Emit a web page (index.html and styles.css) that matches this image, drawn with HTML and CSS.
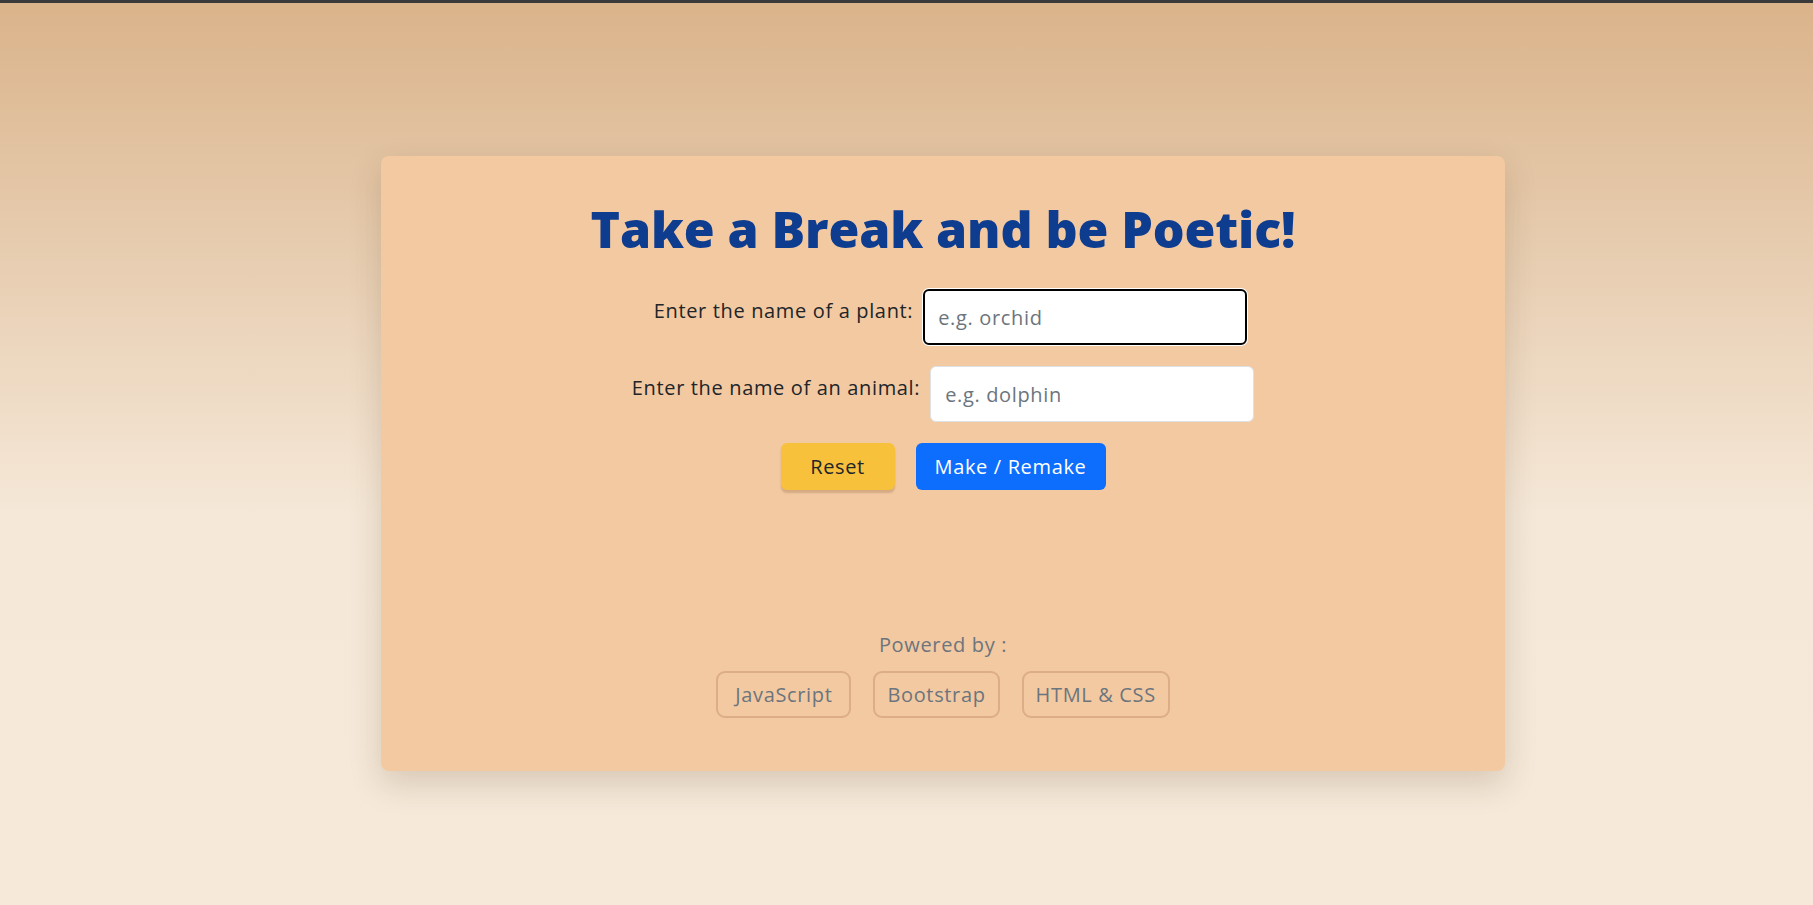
FILE: index.html
```html
<!DOCTYPE html>
<html lang="en">
<head>
<meta charset="utf-8">
<title>Poem Generator</title>
<link rel="stylesheet" href="styles.css">
</head>
<body>
<main class="card">
  <h1 class="title">Take a Break and be Poetic!</h1>
  <form class="form">
    <div class="row row-plant">
      <label class="label" for="plant">Enter the name of a plant:</label>
      <input class="input input-focus" id="plant" type="text" placeholder="e.g. orchid" autofocus>
    </div>
    <div class="row">
      <label class="label" for="animal">Enter the name of an animal:</label>
      <input class="input" id="animal" type="text" placeholder="e.g. dolphin">
    </div>
    <div class="buttons">
      <button type="reset" class="btn btn-reset">Reset</button>
      <button type="button" class="btn btn-make">Make / Remake</button>
    </div>
  </form>
  <footer class="footer">
    <p class="powered">Powered by :</p>
    <div class="badges">
      <span class="badge badge-wide">JavaScript</span>
      <span class="badge">Bootstrap</span>
      <span class="badge">HTML &amp; CSS</span>
    </div>
  </footer>
</main>
</body>
</html>
```
FILE: styles.css
```css
html, body { margin: 0; padding: 0; }
body {
  min-height: 100vh;
  box-sizing: border-box;
  border-top: 3px solid #3a3a3a;
  background: linear-gradient(to bottom, #dab38a 0%, #f5e8d8 57%, #f6e9d9 100%);
  font-family: "Open Sans", "Noto Sans", sans-serif;
  color: #212529;
  overflow: hidden;
}
.card {
  box-sizing: border-box;
  width: 1124px;
  height: 615px;
  margin: 153px 0 0 381px;
  background: #f3c9a2;
  border-radius: 8px;
  box-shadow: 0 12px 32px rgba(80, 50, 20, 0.18);
  padding: 43px 0 53px;
  display: flex;
  flex-direction: column;
  align-items: center;
}
.title {
  margin: 0;
  font-size: 50px;
  font-weight: 800;
  color: #0e3c8e;
  line-height: 60px;
  letter-spacing: -0.1px;
}
.form {
  display: flex;
  flex-direction: column;
  align-items: center;
  width: 100%;
  margin-top: 30px;
}
.row {
  display: flex;
  align-items: center;
  justify-content: center;
  gap: 10px;
  margin-bottom: 21px;
}
.row-plant {
  margin-left: 15px;
}
.label {
  font-size: 20px;
  line-height: 30px;
  letter-spacing: 0.65px;
  margin-bottom: 12px;
  color: #212529;
}
.input {
  box-sizing: border-box;
  width: 324px;
  height: 56px;
  border: 1px solid #dee2e6;
  border-radius: 6px;
  background: #fff;
  padding: 0 14px;
  font: inherit;
  font-size: 20px;
  letter-spacing: 0.65px;
  color: #212529;
  outline: none;
}
.input::placeholder { color: #6c757d; opacity: 1; }
.input-focus {
  border: 2px solid #000;
  padding-left: 13px;
  box-shadow: 0 0 0 1px #fff;
}
.buttons {
  display: flex;
  gap: 21px;
}
.btn {
  box-sizing: border-box;
  height: 47px;
  border: none;
  border-radius: 6px;
  font: inherit;
  font-size: 20px;
  letter-spacing: 0.65px;
  padding: 0;
  text-align: center;
}
.btn-reset {
  width: 114px;
  background: #f7c13c;
  color: #212529;
  box-shadow: 0 3px 2px rgba(120, 80, 40, 0.25);
}
.btn-make {
  width: 190px;
  background: #0d6efd;
  color: #fff;
}
.footer {
  margin-top: auto;
  display: flex;
  flex-direction: column;
  align-items: center;
}
.powered {
  margin: 0 0 11px;
  font-size: 20px;
  line-height: 30px;
  letter-spacing: 0.65px;
  color: #6c757d;
}
.badges {
  display: flex;
  gap: 22px;
}
.badge {
  box-sizing: border-box;
  height: 47px;
  display: flex;
  align-items: center;
  padding: 0 12px;
  border: 2px solid #dcad87;
  border-radius: 9px;
  font-size: 20px;
  letter-spacing: 0.65px;
  color: #6c757d;
}
.badge-wide {
  padding: 0 17px;
}
```
